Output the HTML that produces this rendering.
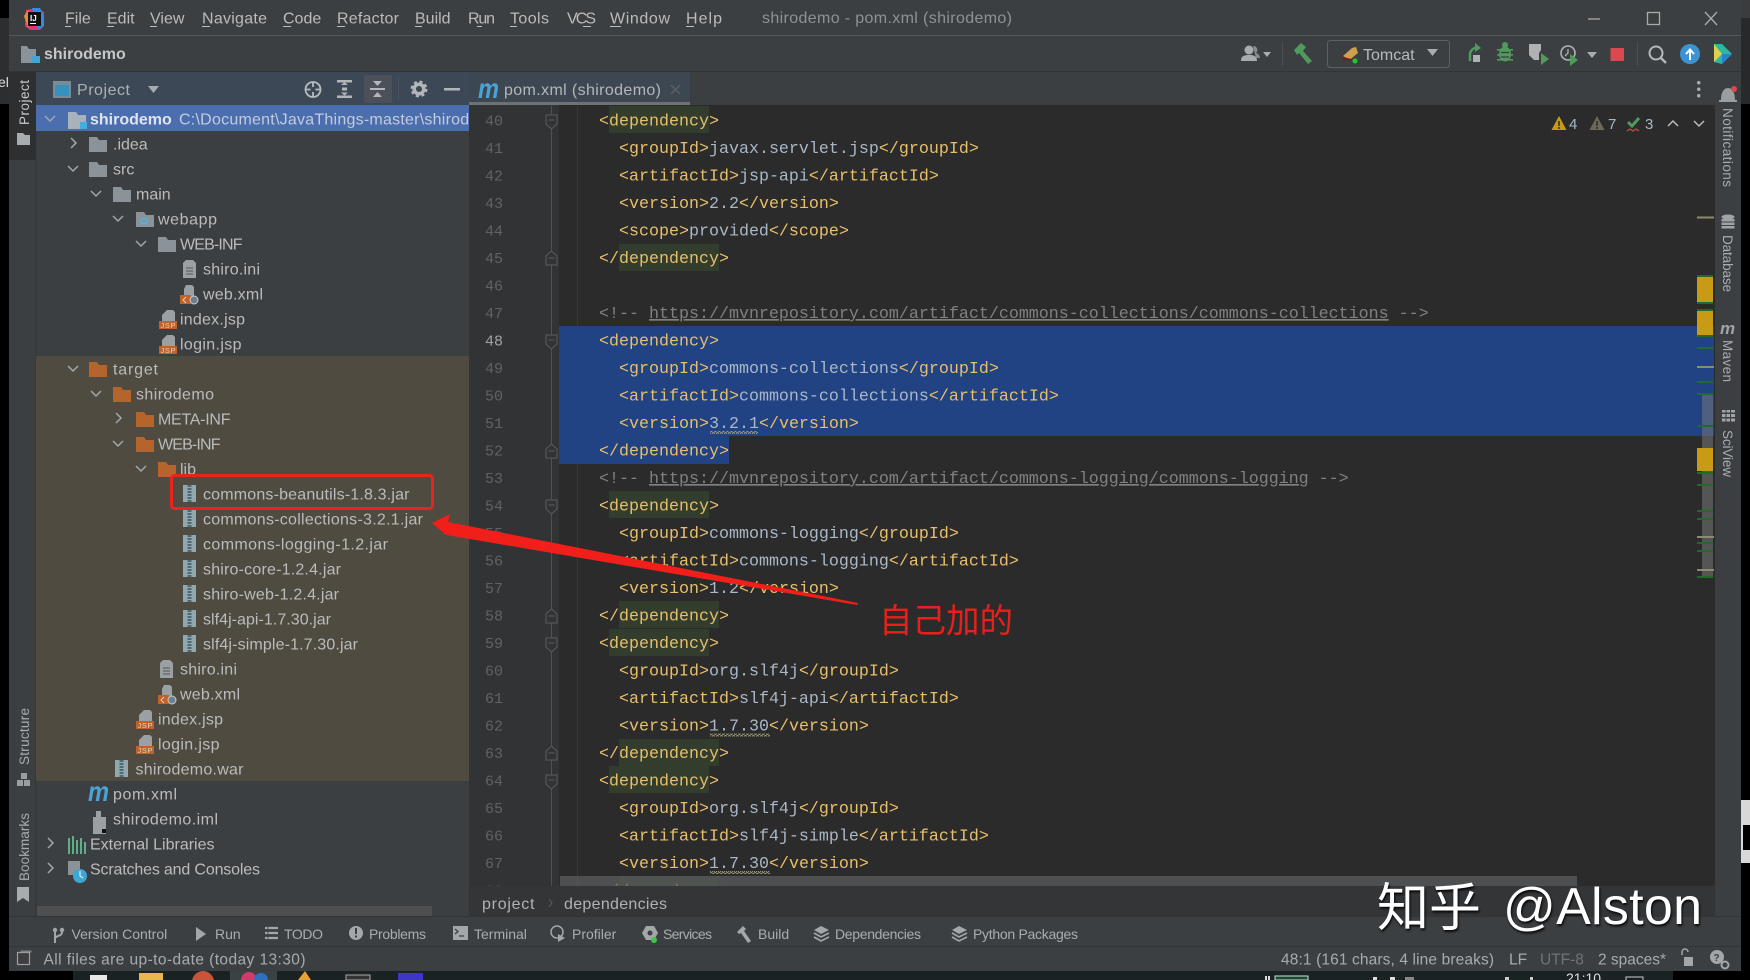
<!DOCTYPE html>
<html><head><meta charset="utf-8"><style>
html,body{margin:0;padding:0;background:#000;width:1750px;height:980px;overflow:hidden}
svg{display:block}
text{font-family:"Liberation Sans","Noto Sans CJK SC",sans-serif;white-space:pre}
.r{font-size:16px;fill:#bbb;transform:translateY(.7px)}
.m{font-size:16px;fill:#bbb;transform:translateY(-.6px)}
.b{font-size:14px;fill:#a9adb0}
.s{font-size:15.5px;fill:#a8abad}
.c{font-family:"Liberation Mono",monospace;font-size:16.67px;fill:#a9b7c6}
.t{fill:#e8bf6a}
.g{fill:#808080}
.n{font-family:"Liberation Mono",monospace;font-size:15px;fill:#606366}
.u{text-decoration:underline}
.v{font-size:13.5px;fill:#a9adb0}
.ic{fill:none;stroke:#afb1b3;stroke-width:1.6}
.cv{fill:none;stroke:#a3a7aa;stroke-width:1.5}
</style></head><body>
<svg width="1750" height="980" viewBox="0 0 1750 980" xmlns="http://www.w3.org/2000/svg">
<defs>
<path id="f" d="M0 0h8l2 3h8v12H0z" fill="#8b9398"/>
<path id="fo" d="M0 0h8l2 3h8v12H0z" fill="#b5652c"/>
<path id="cd" class="cv" d="M-5-2L0 3 5-2"/>
<path id="cr" class="cv" d="M-2-5L3 0-2 5"/>
<g id="jar"><rect width="13" height="17" fill="#92a8b0"/><path d="M6.500 0v17" stroke="#4f6a72" stroke-width="4" stroke-dasharray="2 1"/></g>
<g id="ini"><path d="M3 0h7l3 3v15H0V3z" fill="#9aa0a4"/><path d="M3 8h7M3 11h7M3 14h7" stroke="#555" stroke-width="1"/></g>
<g id="jsp"><path d="M8 0h6l2 2v9H3V5z" fill="#9aa0a4"/><rect x="0" y="11" width="18" height="8" fill="#c0622a"/><text x="1.500" y="18" font-size="7.500" fill="#e8d0b8" style="font-family:'Liberation Sans',sans-serif" textLength="15">JSP</text></g>
<g id="xml"><path d="M6 0h6l2 2v10H4V4z" fill="#9aa0a4"/><rect x="0" y="10" width="11" height="9" fill="#c0622a"/><path d="M6 12l-3 3 3 3" stroke="#e8d0b8" fill="none"/><circle cx="14" cy="15" r="4" fill="#6a8290" stroke="#ccc" stroke-width="1"/></g>
<pattern id="w" width="4" height="3" patternUnits="userSpaceOnUse"><path d="M0 2.500L1 .5 2 .5 3 2.500 4 2.500" fill="none" stroke="#9a9a7a" stroke-width="1"/></pattern>
<clipPath id="pc"><rect x="36" y="106" width="433" height="25"/></clipPath>
<clipPath id="ed"><rect x="469" y="106" width="1246" height="780"/></clipPath>
<clipPath id="tb"><rect x="0" y="971" width="1750" height="9"/></clipPath>
</defs>

<!-- base -->
<rect width="1750" height="980" fill="#000"/>
<rect x="0" y="18" width="9" height="86" fill="#2c2e30"/>
<rect x="1741" y="0" width="9" height="18" fill="#3a3c3e"/>
<rect x="1741" y="18" width="9" height="86" fill="#28292b"/>
<rect x="9" y="0" width="1732" height="971" fill="#3c3f41"/>
<text x="-2" y="87" font-size="14" fill="#ddd">el</text>
<rect x="1741" y="800" width="9" height="63" fill="#d8d8d8"/><rect x="1743" y="825" width="7" height="25" fill="#000"/>

<!-- title bar -->
<rect x="9" y="35" width="1732" height="1" fill="#555759"/>
<rect x="9" y="71" width="1732" height="1" fill="#323537"/>
<g transform="translate(24,8)"><path d="M2 2L14 0l6 4 0 14-4 4-10 0-5-4z" fill="#e0337a"/><path d="M8 0l8 0 4 8v10l-6 4z" fill="#2d8fe0"/><path d="M0 8l4-6 4 8-4 10z" fill="#f08a2c"/><rect x="4" y="4" width="13" height="14" fill="#111"/><text x="6" y="13" font-size="8" font-weight="bold" fill="#fff">IJ</text><rect x="6" y="15" width="6" height="1" fill="#fff"/></g>
<text class="m" x="65" y="24">File</text>
<text class="m" x="107" y="24">Edit</text>
<text class="m" x="150" y="24">View</text>
<text class="m" x="202" y="24" textLength="65">Navigate</text>
<text class="m" x="283" y="24">Code</text>
<text class="m" x="337" y="24" textLength="62">Refactor</text>
<text class="m" x="415" y="24">Build</text>
<text class="m" x="468" y="24" textLength="27">Run</text>
<text class="m" x="510" y="24" textLength="39">Tools</text>
<text class="m" x="567" y="24" textLength="29">VCS</text>
<text class="m" x="610" y="24" textLength="60">Window</text>
<text class="m" x="686" y="24" textLength="36">Help</text>
<path d="M65 26.500h6M107 26.500h7M150 26.500h7M202 26.500h8M283 26.500h8M337 26.500h8M415 26.500h7M477 26.500h5M510 26.500h7M583 26.500h8M610 26.500h11M686 26.500h8" stroke="#bbb" stroke-width="1"/>
<text x="762" y="23" font-size="16" fill="#8f9294" textLength="250">shirodemo - pom.xml (shirodemo)</text>
<path d="M1588 19h12" stroke="#aaa" stroke-width="1.300"/>
<rect x="1647.500" y="12.500" width="12" height="12" fill="none" stroke="#aaa" stroke-width="1.300"/>
<path d="M1705 12l12 13M1717 12l-12 13" stroke="#aaa" stroke-width="1.300"/>

<!-- navbar -->
<path d="M21 46h6l2 3h7v14H21z" fill="#8b9398"/><rect x="32" y="56" width="8" height="7" fill="#3fa7d6"/>
<text x="44" y="59" font-size="16" font-weight="bold" fill="#c4c6c8">shirodemo</text>
<g fill="#a8acae"><circle cx="1249" cy="50" r="4.500"/><path d="M1241 61c0-5 3-6 8-6s8 1 8 6z"/><path d="M1253 46a4 4 0 0 1 3 7c3 1 4 3 4 5h-4z" opacity=".7"/><path d="M1263 52h8l-4 5z"/></g>
<rect x="1282" y="42" width="1" height="24" fill="#4c4f51"/>
<path d="M1294 50l7-7 5 4-3 4 9 10-4 3-9-11-2 2z" fill="#4f9a5c"/>
<rect x="1327.500" y="40.500" width="122" height="27" rx="3" fill="none" stroke="#5d6163"/>
<path d="M1343 56l9-8 4-1 2 6-5 4-3 3z" fill="#d0a050"/><path d="M1342 58l10 2" stroke="#702020" stroke-width="2"/><circle cx="1355" cy="61" r="2.500" fill="#22c92a"/>
<text x="1363" y="60" font-size="16" fill="#b7babc">Tomcat</text>
<path d="M1427 49h11l-5.500 7z" fill="#a8acae"/>
<path d="M1479 48a7 7 0 0 0-9 6v7" fill="none" stroke="#4f9a5c" stroke-width="2.500"/><path d="M1475 43l6 5-6 4z" fill="#4f9a5c"/><rect x="1473" y="55" width="7" height="7" fill="#afb1b3"/>
<g fill="#4f9a5c"><ellipse cx="1505" cy="54" rx="6" ry="7.500"/><circle cx="1505" cy="45" r="3"/><path d="M1497 49h16v1.600h-16zM1497 54h16v1.600h-16zM1497 59h16v1.600h-16z"/></g><path d="M1501 52.500h8M1501 57h8" stroke="#3c3f41" stroke-width="1.200"/>
<path d="M1529 44h12v6l-2 3v7h-5l-5-5z" fill="#afb1b3"/><path d="M1541 53l8 6-8 6z" fill="#4f9a5c"/>
<circle cx="1568" cy="53" r="7" fill="none" stroke="#afb1b3" stroke-width="1.600"/><path d="M1568 49v4l-3 3" fill="none" stroke="#afb1b3" stroke-width="1.300"/><path d="M1570 54l8 6-8 6z" fill="#4f9a5c"/>
<path d="M1587 52h10l-5 6z" fill="#a8acae"/>
<rect x="1610.500" y="48" width="13.500" height="13" fill="#d9494f"/>
<rect x="1637" y="42" width="1" height="24" fill="#4c4f51"/>
<circle cx="1656" cy="53" r="6.500" fill="none" stroke="#b5b7b9" stroke-width="2"/><path d="M1661 58l5 5" stroke="#b5b7b9" stroke-width="2.400"/>
<circle cx="1690" cy="54" r="10" fill="#3c93d2"/><path d="M1690 60v-10M1686 54l4-4.500 4 4.500" fill="none" stroke="#fff" stroke-width="2"/>
<path d="M1714 44l8 0 10 10-10 10-8-2z" fill="#2db6a3"/><path d="M1714 44l8 10-8 8z" fill="#e0d050"/><path d="M1722 54l10 0-10 10z" fill="#2d7fd0"/>

<!-- left tool strip -->
<rect x="35.500" y="72" width="1" height="845" fill="#323537"/>
<rect x="9" y="72" width="27" height="88" fill="#2d2f30"/>
<text class="v" transform="translate(29,125) rotate(-90)" style="fill:#c8cacc" textLength="45">Project</text>
<path d="M17 133h6l2 2h5v10H17z" fill="#a8acae"/>
<text class="v" transform="translate(29,765) rotate(-90)" textLength="57">Structure</text>
<path d="M21 773h6v6h-6zM17 780h6v6h-6zM24 780h6v6h-6z" fill="#9a9ea0"/>
<text class="v" transform="translate(29,881) rotate(-90)" textLength="68">Bookmarks</text>
<path d="M17 887h12v15l-6-4-6 4z" fill="#a8acae"/>

<!-- project panel header -->
<rect x="36" y="72" width="433" height="34" fill="#3d4856"/>
<rect x="53" y="81" width="18" height="17" fill="#7c8a94"/><rect x="55" y="85" width="14" height="11" fill="#3592c0"/>
<text x="77" y="95" font-size="16" fill="#adb1b4" textLength="53">Project</text>
<path d="M148 86h11l-5.500 7z" fill="#a8acae"/>
<g class="ic" style="stroke:#b8bbbd;stroke-width:1.800"><circle cx="313" cy="89.500" r="7.500"/><path d="M313 82v5M313 92v5M305.500 89.500h5M315.500 89.500h5"/></g>
<g fill="#b3b6b8"><rect x="337" y="80" width="15" height="2.500"/><rect x="337" y="95.500" width="15" height="2.500"/><path d="M341 85h7l-3.500-3zM341 92.500h7l-3.500 3zM342 87.500h5v3h-5z"/></g>
<rect x="364" y="75" width="28" height="28" rx="2" fill="#4b5059"/>
<g fill="#b3b6b8"><rect x="370" y="88" width="15" height="2"/><path d="M373 81h9l-4.500 5zM373 97h9l-4.500-5z"/></g>
<rect x="398" y="78" width="1" height="22" fill="#4a5360"/>
<circle cx="419" cy="89" r="4.800" fill="none" stroke="#b3b6b8" stroke-width="3.500"/><circle cx="419" cy="89" r="7.200" fill="none" stroke="#b3b6b8" stroke-width="2.500" stroke-dasharray="3 2.700"/>
<rect x="444" y="88" width="16" height="2.500" fill="#b3b6b8"/>
<rect x="36" y="105" width="433" height="1" fill="#4b6eaf"/>

<!-- tree backgrounds -->
<rect x="36" y="106" width="433" height="25" fill="#4b6eaf"/>
<rect x="36" y="356" width="433" height="425" fill="#4f4b41"/>

<!-- tree -->
<use href="#cd" x="50" y="118"/><path d="M68 112h8l2 3h8v14H68z" fill="#a8b2bd"/><rect x="80" y="122" width="7" height="7" fill="#3fb0e0"/>
<text class="r" x="90" y="124" font-weight="bold" style="fill:#dfe4ec">shirodemo</text>
<g clip-path="url(#pc)"><text class="r" x="179" y="124" style="fill:#c3cbdc" textLength="322">C:\Document\JavaThings-master\shirodemo</text></g>

<use href="#cr" x="73" y="143"/><use href="#f" x="89" y="137"/><text class="r" x="113" y="149">.idea</text>
<use href="#cd" x="73" y="168"/><use href="#f" x="89" y="162"/><text class="r" x="113" y="174">src</text>
<use href="#cd" x="96" y="193"/><use href="#f" x="113" y="187"/><text class="r" x="136" y="199">main</text>
<use href="#cd" x="118" y="218"/><use href="#f" x="136" y="212"/><circle cx="144" cy="221" r="3" fill="none" stroke="#4ab4e6" stroke-width="1.600"/><text class="r" x="158" y="224" textLength="59">webapp</text>
<use href="#cd" x="141" y="243"/><use href="#f" x="158" y="237"/><text class="r" x="180" y="249" textLength="62.500">WEB-INF</text>
<use href="#ini" x="183" y="260"/><text class="r" x="203" y="274" textLength="57">shiro.ini</text>
<use href="#xml" x="180" y="285"/><text class="r" x="203" y="299" textLength="60">web.xml</text>
<use href="#jsp" x="159" y="310"/><text class="r" x="180" y="324" textLength="65">index.jsp</text>
<use href="#jsp" x="159" y="335"/><text class="r" x="180" y="349" textLength="61.500">login.jsp</text>

<use href="#cd" x="73" y="368"/><use href="#fo" x="89" y="362"/><text class="r" x="113" y="374" textLength="45">target</text>
<use href="#cd" x="96" y="393"/><use href="#fo" x="113" y="387"/><text class="r" x="136" y="399" textLength="78">shirodemo</text>
<use href="#cr" x="118" y="418"/><use href="#fo" x="136" y="412"/><text class="r" x="158" y="424" textLength="72.500">META-INF</text>
<use href="#cd" x="118" y="443"/><use href="#fo" x="136" y="437"/><text class="r" x="158" y="449" textLength="62.500">WEB-INF</text>
<use href="#cd" x="141" y="468"/><use href="#fo" x="158" y="462"/><text class="r" x="180" y="474">lib</text>
<use href="#jar" x="183" y="485"/><text class="r" x="203" y="499" textLength="206.500">commons-beanutils-1.8.3.jar</text>
<use href="#jar" x="183" y="510"/><text class="r" x="203" y="524" textLength="220">commons-collections-3.2.1.jar</text>
<use href="#jar" x="183" y="535"/><text class="r" x="203" y="549" textLength="185">commons-logging-1.2.jar</text>
<use href="#jar" x="183" y="560"/><text class="r" x="203" y="574" textLength="138">shiro-core-1.2.4.jar</text>
<use href="#jar" x="183" y="585"/><text class="r" x="203" y="599" textLength="136">shiro-web-1.2.4.jar</text>
<use href="#jar" x="183" y="610"/><text class="r" x="203" y="624" textLength="128">slf4j-api-1.7.30.jar</text>
<use href="#jar" x="183" y="635"/><text class="r" x="203" y="649" textLength="155">slf4j-simple-1.7.30.jar</text>
<use href="#ini" x="160" y="660"/><text class="r" x="180" y="674" textLength="57">shiro.ini</text>
<use href="#xml" x="158" y="685"/><text class="r" x="180" y="699" textLength="60">web.xml</text>
<use href="#jsp" x="136" y="710"/><text class="r" x="158" y="724" textLength="65">index.jsp</text>
<use href="#jsp" x="136" y="735"/><text class="r" x="158" y="749" textLength="61.500">login.jsp</text>
<use href="#jar" x="115" y="760"/><text class="r" x="135.500" y="774" textLength="108">shirodemo.war</text>
<text x="88" y="801" font-size="28" font-weight="bold" font-style="italic" style="fill:#4aa3d6;font-family:'Liberation Sans',sans-serif" textLength="21" lengthAdjust="spacingAndGlyphs">m</text><text class="r" x="113" y="799" textLength="64">pom.xml</text>
<path d="M96 811h5v6h-5zM93 817h13v17H93z" fill="#9aa0a4"/><rect x="102" y="829" width="4" height="4" fill="#111"/><text class="r" x="113" y="824" textLength="105">shirodemo.iml</text>
<use href="#cr" x="50" y="843"/><path d="M68 838h2v16h-2zM72 836h2v18h-2zM76 840h2v14h-2zM80 838h2v16h-2zM84 842h2v12h-2z" fill="#5fae8a"/><text class="r" x="90" y="849">External Libraries</text>
<use href="#cr" x="50" y="868"/><path d="M68 861h12v14H68z" fill="#8b9398"/><circle cx="80" cy="876" r="7" fill="#3fa7d6"/><path d="M80 871v5l3 2" stroke="#fff" fill="none"/><text class="r" x="90" y="874" textLength="170">Scratches and Consoles</text>
<rect x="37" y="906" width="395" height="10" fill="#4d4f51"/>

<!-- tabs -->
<rect x="469" y="72" width="221" height="31" fill="#3d4751"/>
<rect x="469" y="102" width="221" height="3" fill="#6e7274"/>
<text x="478" y="98" font-size="28" font-weight="bold" font-style="italic" style="fill:#4aa3d6;font-family:'Liberation Sans',sans-serif" textLength="21" lengthAdjust="spacingAndGlyphs">m</text>
<text x="504" y="95" font-size="16" fill="#b4b7b9" textLength="157">pom.xml (shirodemo)</text>
<path d="M671 85l9 9M680 85l-9 9" stroke="#5c6063" stroke-width="1.300"/>
<rect x="1697" y="81" width="3.500" height="3.500" rx="1.700" fill="#a8acae"/><rect x="1697" y="87.500" width="3.500" height="3.500" rx="1.700" fill="#a8acae"/><rect x="1697" y="94" width="3.500" height="3.500" rx="1.700" fill="#a8acae"/>

<!-- editor -->
<rect x="469" y="105" width="1246" height="781" fill="#2b2b2b"/>
<rect x="469" y="105" width="90" height="781" fill="#313335"/>
<rect x="469" y="886" width="1246" height="31" fill="#333537"/>
<g clip-path="url(#ed)">
<rect x="577" y="105" width="1" height="781" fill="#383838"/>
<rect x="551" y="105" width="1" height="781" fill="#4f5153"/>
<!-- selection -->
<rect x="559" y="326" width="1155" height="110" fill="#214283"/>
<rect x="559" y="436" width="170" height="28" fill="#214283"/>
<!-- tag highlights -->
<g fill="#323d2e">
<rect x="609" y="106" width="100" height="27"/>
<rect x="619" y="244" width="100" height="27"/>
<rect x="609" y="491" width="100" height="27"/>
<rect x="619" y="601" width="100" height="27"/>
<rect x="609" y="629" width="100" height="27"/>
<rect x="619" y="739" width="100" height="27"/>
<rect x="609" y="766" width="100" height="27"/>
<rect x="619" y="876" width="100" height="27"/>
</g>
<!-- fold markers -->
<g fill="#313335" stroke="#5a5c5e" stroke-width="1">
<path d="M546 115h11v9l-5.500 5-5.500-5z"/><path d="M546 265h11v-9l-5.500-5-5.500 5z"/>
<path d="M546 335h11v9l-5.500 5-5.500-5z"/><path d="M546 458h11v-9l-5.500-5-5.500 5z"/>
<path d="M546 500h11v9l-5.500 5-5.500-5z"/><path d="M546 623h11v-9l-5.500-5-5.500 5z"/>
<path d="M546 638h11v9l-5.500 5-5.500-5z"/><path d="M546 760h11v-9l-5.500-5-5.500 5z"/>
<path d="M546 775h11v9l-5.500 5-5.500-5z"/>
<path d="M548.500 120h6M548.500 258h6M548.500 340h6M548.500 451h6M548.500 505h6M548.500 616h6M548.500 643h6M548.500 753h6M548.500 780h6" fill="none"/>
</g>
<!-- line numbers -->
<text class="n" x="485" y="125.500">40</text><text class="n" x="485" y="153">41</text><text class="n" x="485" y="180.500">42</text><text class="n" x="485" y="208">43</text><text class="n" x="485" y="235.500">44</text><text class="n" x="485" y="263">45</text><text class="n" x="485" y="290.500">46</text><text class="n" x="485" y="318">47</text><text class="n" x="485" y="345.500" style="fill:#a4a3a3">48</text><text class="n" x="485" y="373">49</text><text class="n" x="485" y="400.500">50</text><text class="n" x="485" y="428">51</text><text class="n" x="485" y="455.500">52</text><text class="n" x="485" y="483">53</text><text class="n" x="485" y="510.500">54</text><text class="n" x="485" y="538">55</text><text class="n" x="485" y="565.500">56</text><text class="n" x="485" y="593">57</text><text class="n" x="485" y="620.500">58</text><text class="n" x="485" y="648">59</text><text class="n" x="485" y="675.500">60</text><text class="n" x="485" y="703">61</text><text class="n" x="485" y="730.500">62</text><text class="n" x="485" y="758">63</text><text class="n" x="485" y="785.500">64</text><text class="n" x="485" y="813">65</text><text class="n" x="485" y="840.500">66</text><text class="n" x="485" y="868">67</text><text class="n" x="485" y="895.500">68</text>
<!-- code -->
<text class="c t" x="599" y="125.500">&lt;dependency&gt;</text>
<text class="c" x="619" y="153"><tspan class="t">&lt;groupId&gt;</tspan>javax.servlet.jsp<tspan class="t">&lt;/groupId&gt;</tspan></text>
<text class="c" x="619" y="180.500"><tspan class="t">&lt;artifactId&gt;</tspan>jsp-api<tspan class="t">&lt;/artifactId&gt;</tspan></text>
<text class="c" x="619" y="208"><tspan class="t">&lt;version&gt;</tspan>2.2<tspan class="t">&lt;/version&gt;</tspan></text>
<text class="c" x="619" y="235.500"><tspan class="t">&lt;scope&gt;</tspan>provided<tspan class="t">&lt;/scope&gt;</tspan></text>
<text class="c t" x="599" y="263">&lt;/dependency&gt;</text>
<text class="c g" x="599" y="318">&lt;!-- <tspan class="u">https://mvnrepository.com/artifact/commons-collections/commons-collections</tspan> --&gt;</text>
<text class="c t" x="599" y="345.500">&lt;dependency&gt;</text>
<text class="c" x="619" y="373"><tspan class="t">&lt;groupId&gt;</tspan>commons-collections<tspan class="t">&lt;/groupId&gt;</tspan></text>
<text class="c" x="619" y="400.500"><tspan class="t">&lt;artifactId&gt;</tspan>commons-collections<tspan class="t">&lt;/artifactId&gt;</tspan></text>
<text class="c" x="619" y="428"><tspan class="t">&lt;version&gt;</tspan>3.2.1<tspan class="t">&lt;/version&gt;</tspan></text>
<text class="c t" x="599" y="455.500">&lt;/dependency&gt;</text>
<text class="c g" x="599" y="483">&lt;!-- <tspan class="u">https://mvnrepository.com/artifact/commons-logging/commons-logging</tspan> --&gt;</text>
<text class="c t" x="599" y="510.500">&lt;dependency&gt;</text>
<text class="c" x="619" y="538"><tspan class="t">&lt;groupId&gt;</tspan>commons-logging<tspan class="t">&lt;/groupId&gt;</tspan></text>
<text class="c" x="619" y="565.500"><tspan class="t">&lt;artifactId&gt;</tspan>commons-logging<tspan class="t">&lt;/artifactId&gt;</tspan></text>
<text class="c" x="619" y="593"><tspan class="t">&lt;version&gt;</tspan>1.2<tspan class="t">&lt;/version&gt;</tspan></text>
<text class="c t" x="599" y="620.500">&lt;/dependency&gt;</text>
<text class="c t" x="599" y="648">&lt;dependency&gt;</text>
<text class="c" x="619" y="675.500"><tspan class="t">&lt;groupId&gt;</tspan>org.slf4j<tspan class="t">&lt;/groupId&gt;</tspan></text>
<text class="c" x="619" y="703"><tspan class="t">&lt;artifactId&gt;</tspan>slf4j-api<tspan class="t">&lt;/artifactId&gt;</tspan></text>
<text class="c" x="619" y="730.500"><tspan class="t">&lt;version&gt;</tspan>1.7.30<tspan class="t">&lt;/version&gt;</tspan></text>
<text class="c t" x="599" y="758">&lt;/dependency&gt;</text>
<text class="c t" x="599" y="785.500">&lt;dependency&gt;</text>
<text class="c" x="619" y="813"><tspan class="t">&lt;groupId&gt;</tspan>org.slf4j<tspan class="t">&lt;/groupId&gt;</tspan></text>
<text class="c" x="619" y="840.500"><tspan class="t">&lt;artifactId&gt;</tspan>slf4j-simple<tspan class="t">&lt;/artifactId&gt;</tspan></text>
<text class="c" x="619" y="868"><tspan class="t">&lt;version&gt;</tspan>1.7.30<tspan class="t">&lt;/version&gt;</tspan></text>
<text class="c t" x="599" y="895.500">&lt;/dependency&gt;</text>
<!-- wavy -->
<rect x="710" y="431" width="48" height="3" fill="url(#w)"/>
<rect x="710" y="733.500" width="60" height="3" fill="url(#w)"/>
<rect x="710" y="871" width="60" height="3" fill="url(#w)"/>
<!-- horizontal scrollbar -->
<rect x="560" y="876" width="1017" height="10" fill="#5a5c5e" opacity=".75"/>
</g>
<text x="482" y="909" font-size="16" fill="#b0b3b5" textLength="52.500">project</text>
<path d="M549 899l3 4-3 4" fill="none" stroke="#5c5f61"/>
<text x="564" y="909" font-size="16" fill="#b0b3b5" textLength="103">dependencies</text>

<!-- inspection widget -->
<path d="M1559 116l7.500 14h-15z" fill="#c99a14"/><path d="M1559 121v5M1559 127v2" stroke="#2b2b2b" stroke-width="1.500"/>
<text x="1569" y="129" font-size="15" fill="#a9b7c6">4</text>
<path d="M1597 116l7.500 14h-15z" fill="#6d6857"/><path d="M1597 121v5M1597 127v2" stroke="#2b2b2b" stroke-width="1.500"/>
<text x="1608" y="129" font-size="15" fill="#a9b7c6">7</text>
<path d="M1628 122l4 4 7-8" fill="none" stroke="#4f9a5c" stroke-width="3"/><path d="M1627 131l3-2 3 2 3-2 3 2" fill="none" stroke="#c24d4d" stroke-width="1.200"/>
<text x="1645" y="129" font-size="15" fill="#a9b7c6">3</text>
<path d="M1668 126l5-5 5 5" class="cv" style="stroke:#bbb"/><path d="M1694 121l5 5 5-5" class="cv" style="stroke:#bbb"/>

<!-- error stripes -->
<rect x="1702" y="395" width="11" height="182" fill="#787878" opacity=".55"/>
<g fill="#c99a14"><rect x="1697" y="277" width="16" height="25"/><rect x="1697" y="311" width="16" height="24"/><rect x="1697" y="448" width="16" height="23"/></g>
<g fill="#1f6b2c"><rect x="1697" y="275" width="16" height="2"/><rect x="1697" y="302" width="16" height="2"/><rect x="1697" y="309" width="16" height="2"/><rect x="1697" y="335" width="16" height="2"/><rect x="1697" y="347" width="16" height="2"/><rect x="1697" y="381" width="16" height="2"/><rect x="1697" y="393" width="16" height="2"/><rect x="1697" y="425" width="16" height="2"/><rect x="1697" y="472" width="16" height="2"/><rect x="1697" y="484" width="16" height="2"/><rect x="1697" y="510" width="16" height="2"/><rect x="1697" y="518" width="16" height="2"/><rect x="1697" y="542" width="16" height="2"/><rect x="1697" y="550" width="16" height="2"/><rect x="1697" y="576" width="16" height="2"/></g>
<g fill="#8f8a72"><rect x="1697" y="216.500" width="17" height="2"/><rect x="1697" y="366" width="17" height="2"/><rect x="1697" y="536" width="17" height="2"/><rect x="1697" y="569" width="17" height="2"/></g>

<!-- right strip -->
<rect x="1715" y="105" width="26" height="812" fill="#3c3f41"/>
<path d="M1721 102c0-8 3-12 7-12s7 4 7 12h2v2h-18v-2z" fill="#9a9ea0" transform="translate(0,-2)"/><circle cx="1734" cy="89" r="3" fill="#d9494f"/>
<text class="v" transform="translate(1723,108) rotate(90)" textLength="79">Notifications</text>
<g fill="#a0a4a6"><ellipse cx="1728" cy="217" rx="6.500" ry="2.500"/><rect x="1721.500" y="219" width="13" height="2.500"/><rect x="1721.500" y="222.500" width="13" height="2.500"/><rect x="1721.500" y="226" width="13" height="2.500"/></g>
<text class="v" transform="translate(1723,235) rotate(90)" textLength="57">Database</text>
<text x="1720" y="334" font-size="17" font-weight="bold" font-style="italic" fill="#a0a4a6">m</text>
<text class="v" transform="translate(1723,340) rotate(90)" textLength="42">Maven</text>
<g fill="#a0a4a6"><rect x="1722" y="410" width="13" height="2.500"/><rect x="1722" y="414" width="13" height="3"/><rect x="1722" y="418.500" width="13" height="3"/></g><path d="M1726 410v12M1730.500 410v12" stroke="#3c3f41"/>
<text class="v" transform="translate(1723,430) rotate(90)" textLength="47">SciView</text>

<!-- bottom tool bar -->
<rect x="9" y="916" width="1732" height="1" fill="#323537"/>
<rect x="9" y="946" width="1732" height="1" fill="#333638"/>
<g fill="none" stroke="#a3a7aa" stroke-width="2"><circle cx="55" cy="930" r="1.200"/><circle cx="62" cy="930" r="1.200"/><path d="M55 931v12M62 932c0 5-7 3-7 7"/></g>
<text class="b" x="71.500" y="939">Version Control</text>
<path d="M196 927l10 7-10 7z" fill="#a3a7aa"/><text class="b" x="215" y="939">Run</text>
<path d="M265 928h13M265 933h13M265 938h13" stroke="#a3a7aa" stroke-width="2.200" stroke-dasharray="2.500 .8 9.700 0"/><text class="b" x="284" y="939" textLength="39">TODO</text>
<circle cx="356" cy="933" r="7" fill="#a3a7aa"/><path d="M356 928v6M356 935.500v2" stroke="#3c3f41" stroke-width="2"/><text class="b" x="369" y="939" textLength="57">Problems</text>
<rect x="453" y="926" width="15" height="14" fill="#a3a7aa"/><path d="M455 929l3 2.500-3 2.500M459 936h5" fill="none" stroke="#3c3f41" stroke-width="1.300"/><text class="b" x="474" y="939">Terminal</text>
<circle cx="557" cy="932" r="6" fill="none" stroke="#a3a7aa" stroke-width="1.500"/><path d="M558 934l7 4-7 4z" fill="#a3a7aa"/><text class="b" x="572" y="939">Profiler</text>
<path d="M646 926h8l4 7-4 7h-8l-4-7z" fill="#a3a7aa"/><circle cx="650" cy="933" r="2.500" fill="#3c3f41"/><circle cx="654" cy="940" r="3" fill="#3fc94a"/><text class="b" x="663" y="939" textLength="49">Services</text>
<path d="M737 932l6-6 3 3-2 2 7 10-3 2-7-10-2 1z" fill="#a3a7aa"/><text class="b" x="758" y="939">Build</text>
<path d="M821 926l8 4-8 4-7-4z" fill="#a3a7aa"/><path d="M814 933l7 4 8-4M814 937l7 4 8-4" fill="none" stroke="#a3a7aa" stroke-width="1.600"/><text class="b" x="835" y="939" textLength="86">Dependencies</text>
<path d="M959 926l8 4-8 4-7-4z" fill="#a3a7aa"/><path d="M952 933l7 4 8-4M952 937l7 4 8-4" fill="none" stroke="#a3a7aa" stroke-width="1.600"/><text class="b" x="973" y="939" textLength="105">Python Packages</text>

<!-- status bar -->
<rect x="17.500" y="952.500" width="12" height="12" fill="none" stroke="#9a9ea0" stroke-width="1.200"/><rect x="20.500" y="950.500" width="11" height="2" fill="#9a9ea0" opacity=".7"/>
<text class="s" x="43.500" y="964.500" textLength="262">All files are up-to-date (today 13:30)</text>
<text class="s" x="1281" y="964.500" textLength="213">48:1 (161 chars, 4 line breaks)</text>
<text class="s" x="1509" y="964.500">LF</text>
<text class="s" x="1540" y="964.500" style="fill:#6f7376">UTF-8</text>
<text class="s" x="1598" y="964.500" textLength="68">2 spaces*</text>
<path d="M1682 955v-3a3 3 0 0 1 6 0" fill="none" stroke="#a3a7aa" stroke-width="1.500"/><rect x="1684" y="957" width="9" height="9" fill="#a3a7aa"/>
<circle cx="1717" cy="957" r="7" fill="#a3a7aa"/><text x="1713.500" y="961" font-size="10" font-weight="bold" fill="#3c3f41">?</text><circle cx="1725" cy="965" r="3.500" fill="none" stroke="#a3a7aa" stroke-width="2"/>

<!-- taskbar -->
<g clip-path="url(#tb)">
<rect x="73" y="971" width="1600" height="9" fill="#1a2224"/>
<rect x="230" y="971" width="47" height="9" fill="#3a4244"/>
<rect x="90" y="975" width="17" height="5" fill="#e8e8e8"/>
<rect x="139" y="973" width="24" height="7" fill="#e8b84c"/>
<circle cx="203" cy="982" r="11" fill="#c9543a"/>
<circle cx="249" cy="980" r="8" fill="#d13a6a"/><circle cx="261" cy="980" r="7" fill="#2f6fc0"/>
<path d="M298 980l7-9 6 9z" fill="#e8a030"/>
<rect x="346" y="975" width="24" height="5" fill="#333" stroke="#aaa"/>
<rect x="398" y="973" width="25" height="7" fill="#3f36c8"/>
<rect x="1265" y="976" width="2" height="4" fill="#ddd"/><rect x="1268" y="976" width="2" height="4" fill="#ddd"/><rect x="1275" y="976" width="33" height="4" fill="#1c4a30" stroke="#cdd"/>
<rect x="1373" y="977" width="4" height="3" fill="#ddd"/><rect x="1390" y="977" width="5" height="3" fill="#ddd"/><rect x="1405" y="977" width="9" height="3" fill="#888"/>
<rect x="1505" y="977" width="4" height="3" fill="#ccc"/><rect x="1530" y="977" width="3" height="3" fill="#ccc"/>
<text x="1566" y="983" font-size="14" fill="#ddd">21:10</text>
<rect x="1626" y="977" width="17" height="4" fill="none" stroke="#ccc"/>
</g>

<!-- annotations -->
<rect x="171.500" y="475.500" width="261" height="33" rx="3" fill="none" stroke="#e8241c" stroke-width="3"/>
<polygon points="432,523 450,514 448,522 858,603 857,605 458,537 446,535" fill="#f01f1a"/>
<text x="879" y="632.500" font-size="33.500" fill="#e8201c" style="font-family:'Noto Sans CJK SC',sans-serif">自己加的</text>
<g style="filter:drop-shadow(1.500px 2px 1px rgba(0,0,0,.85))">
<text x="1377" y="926" font-size="52" fill="#fff" style="font-family:'Noto Sans CJK SC',sans-serif">知乎</text>
<text x="1503" y="924" font-size="52" fill="#fff" textLength="199">@Alston</text>
</g>
</svg>
</body></html>
